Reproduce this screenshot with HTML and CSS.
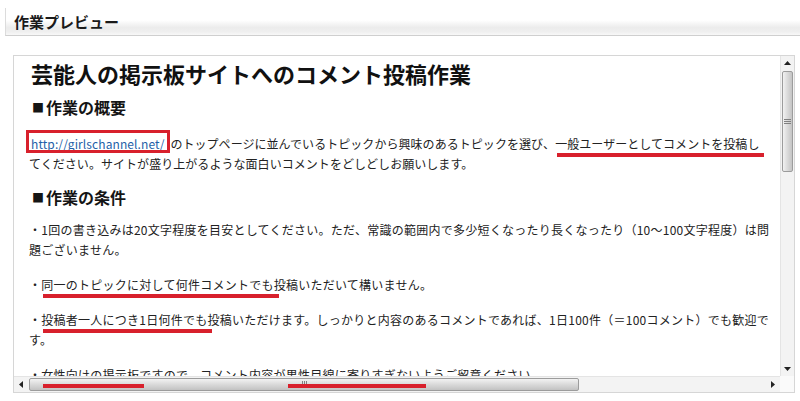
FILE: index.html
```html
<!DOCTYPE html>
<html lang="ja">
<head>
<meta charset="utf-8">
<title>作業プレビュー</title>
<link rel="stylesheet" href="styles.css">
</head>
<body>
<div class="page">
  <header class="bar">
    <h1 class="bar-title">作業プレビュー</h1>
  </header>
  <div class="panel">
    <div class="content">
      <h2 class="task-title">芸能人の掲示板サイトへのコメント投稿作業</h2>
      <section class="section overview">
        <h3 class="sec-title"><span class="sq">■</span>作業の概要</h3>
        <p class="para"><a class="link boxed" href="#">http://girlschannel.net/</a> のトップページに並んでいるトピックから興味のあるトピックを選び、<span class="mark">一般ユーザーとしてコメントを投稿し</span><br>てください。サイトが盛り上がるような面白いコメントをどしどしお願いします。</p>
      </section>
      <section class="section conditions">
        <h3 class="sec-title"><span class="sq">■</span>作業の条件</h3>
        <p class="para">・1回の書き込みは20文字程度を目安としてください。ただ、常識の範囲内で多少短くなったり長くなったり（10〜100文字程度）は問<br>題ございません。</p>
        <p class="para">・<span class="mark">同一のトピックに対して何件コメントでも</span>投稿いただいて構いません。</p>
        <p class="para">・<span class="mark">投稿者一人につき1日何件でも</span>投稿いただけます。しっかりと内容のあるコメントであれば、1日100件（＝100コメント）でも歓迎で<br>す。</p>
        <p class="para">・<span class="mark">女性向けの掲示板</span>ですので、コメント内容が<span class="mark">男性目線に寄りすぎない</span>ようご留意ください。</p>
      </section>
    </div>
    <div class="vscroll">
      <div class="sb-btn">
        <svg width="7" height="5" viewBox="0 0 7 5"><polygon points="3.5,0 7,4 0,4" fill="#222"/></svg>
      </div>
      <div class="vthumb">
        <svg width="7" height="7" viewBox="0 0 7 7"><path d="M0 1.5H7M0 3.5H7M0 5.5H7" stroke="#808080" stroke-width="1"/></svg>
      </div>
      <div class="vtrack"></div>
      <div class="sb-btn">
        <svg width="7" height="5" viewBox="0 0 7 5"><polygon points="0,1 7,1 3.5,5" fill="#222"/></svg>
      </div>
    </div>
    <div class="hscroll">
      <div class="sb-btn">
        <svg width="5" height="7" viewBox="0 0 5 7"><polygon points="0,3.5 4,0 4,7" fill="#222"/></svg>
      </div>
      <div class="hthumb">
        <svg width="7" height="7" viewBox="0 0 7 7"><path d="M1.5 0V7M3.5 0V7M5.5 0V7" stroke="#808080" stroke-width="1"/></svg>
      </div>
      <div class="htrack"></div>
      <div class="sb-btn">
        <svg width="5" height="7" viewBox="0 0 5 7"><polygon points="1,0 5,3.5 1,7" fill="#222"/></svg>
      </div>
    </div>
    <div class="corner"></div>
  </div>
</div>
</body>
</html>
```
FILE: styles.css
```css
* { box-sizing: border-box; }

html, body {
  margin: 0;
  padding: 0;
  background: #fff;
}

body {
  font-family: "Noto Sans CJK JP", "Noto Sans", sans-serif;
  color: #222;
  width: 800px;
  height: 401px;
  overflow: hidden;
}

.page {
  padding-top: 8px;
}

.bar {
  margin-left: 5px;
  height: 28px;
  border-left: 1px solid #dcdcdc;
  border-bottom: 1px solid #cfcfcf;
  background: linear-gradient(#fff 0%, #fff 45%, #ececec 72%, #efefef 88%, #f8f8f8 100%);
  display: flex;
  align-items: center;
  padding-left: 8px;
}

.bar-title {
  margin: 0;
  font-size: 15px;
  line-height: 20px;
  font-weight: bold;
  color: #1a1a1a;
}

.panel {
  margin: 19px 0 0 13px;
  width: 782px;
  height: 338px;
  border: 1px solid #d6d6d6;
  display: grid;
  grid-template-columns: 766px 14px;
  grid-template-rows: 320px 16px;
}

.content {
  padding: 2px 2px 0 15px;
  min-width: 0;
}

.task-title {
  margin: 0 0 8px;
  font-size: 22px;
  line-height: 30px;
  font-weight: bold;
  color: #111;
  padding-left: 2px;
}

.sec-title {
  margin: 0 0 15px;
  font-size: 16px;
  line-height: 22px;
  font-weight: bold;
  color: #151515;
  padding-left: 3px;
}

.sq {
  font-size: 12px;
  display: inline-block;
  width: 14px;
  vertical-align: 1px;
}

.section.overview {
  margin-bottom: 12px;
}

.conditions .sec-title {
  margin-bottom: 11px;
}

.para {
  margin: 0 0 15px;
  font-size: 12px;
  line-height: 20px;
  letter-spacing: 0.25px;
  color: #222;
}

.overview .para {
  letter-spacing: 0.05px;
}

.para:last-child {
  margin-bottom: 0;
}

.link {
  color: #1f5fa8;
  text-decoration: underline;
  margin: 0 3px 0 2px;
  letter-spacing: 0.1px;
}

.boxed {
  position: relative;
}

.boxed::after {
  content: "";
  position: absolute;
  left: -5px;
  right: -5px;
  top: -5px;
  bottom: -1px;
  border: 3px solid #d8202c;
  z-index: 2;
}

.mark {
  position: relative;
}

.mark::after {
  content: "";
  position: absolute;
  left: 2px;
  right: -5px;
  top: calc(100% + 1px);
  height: 4px;
  background: #d8202c;
  z-index: 2;
}

/* scrollbars */
.vscroll {
  grid-column: 2;
  grid-row: 1;
  display: flex;
  flex-direction: column;
  background: #f3f3f3;
  border-left: 1px solid #e4e4e4;
}

.hscroll {
  grid-column: 1;
  grid-row: 2;
  display: flex;
  background: #f3f3f3;
  border-top: 1px solid #e4e4e4;
  position: relative;
  z-index: 1;
}

.corner {
  grid-column: 2;
  grid-row: 2;
  background: #fafafa;
  position: relative;
  z-index: 1;
}

.sb-btn {
  flex: 0 0 15px;
  display: flex;
  align-items: center;
  justify-content: center;
}

.vthumb {
  flex: 0 0 101px;
  margin: 0 1px;
  border: 1px solid #9c9c9c;
  border-radius: 2px;
  background: linear-gradient(90deg, #f2f2f2, #dcdcdc 45%, #c4c4c4);
  display: flex;
  align-items: center;
  justify-content: center;
}

.vtrack {
  flex: 1;
}

.hthumb {
  flex: 0 0 550px;
  margin: 1px 0;
  border: 1px solid #9c9c9c;
  border-radius: 2px;
  background: linear-gradient(#f2f2f2, #dcdcdc 45%, #c2c2c2);
  display: flex;
  align-items: center;
  justify-content: center;
}

.htrack {
  flex: 1;
}
```
